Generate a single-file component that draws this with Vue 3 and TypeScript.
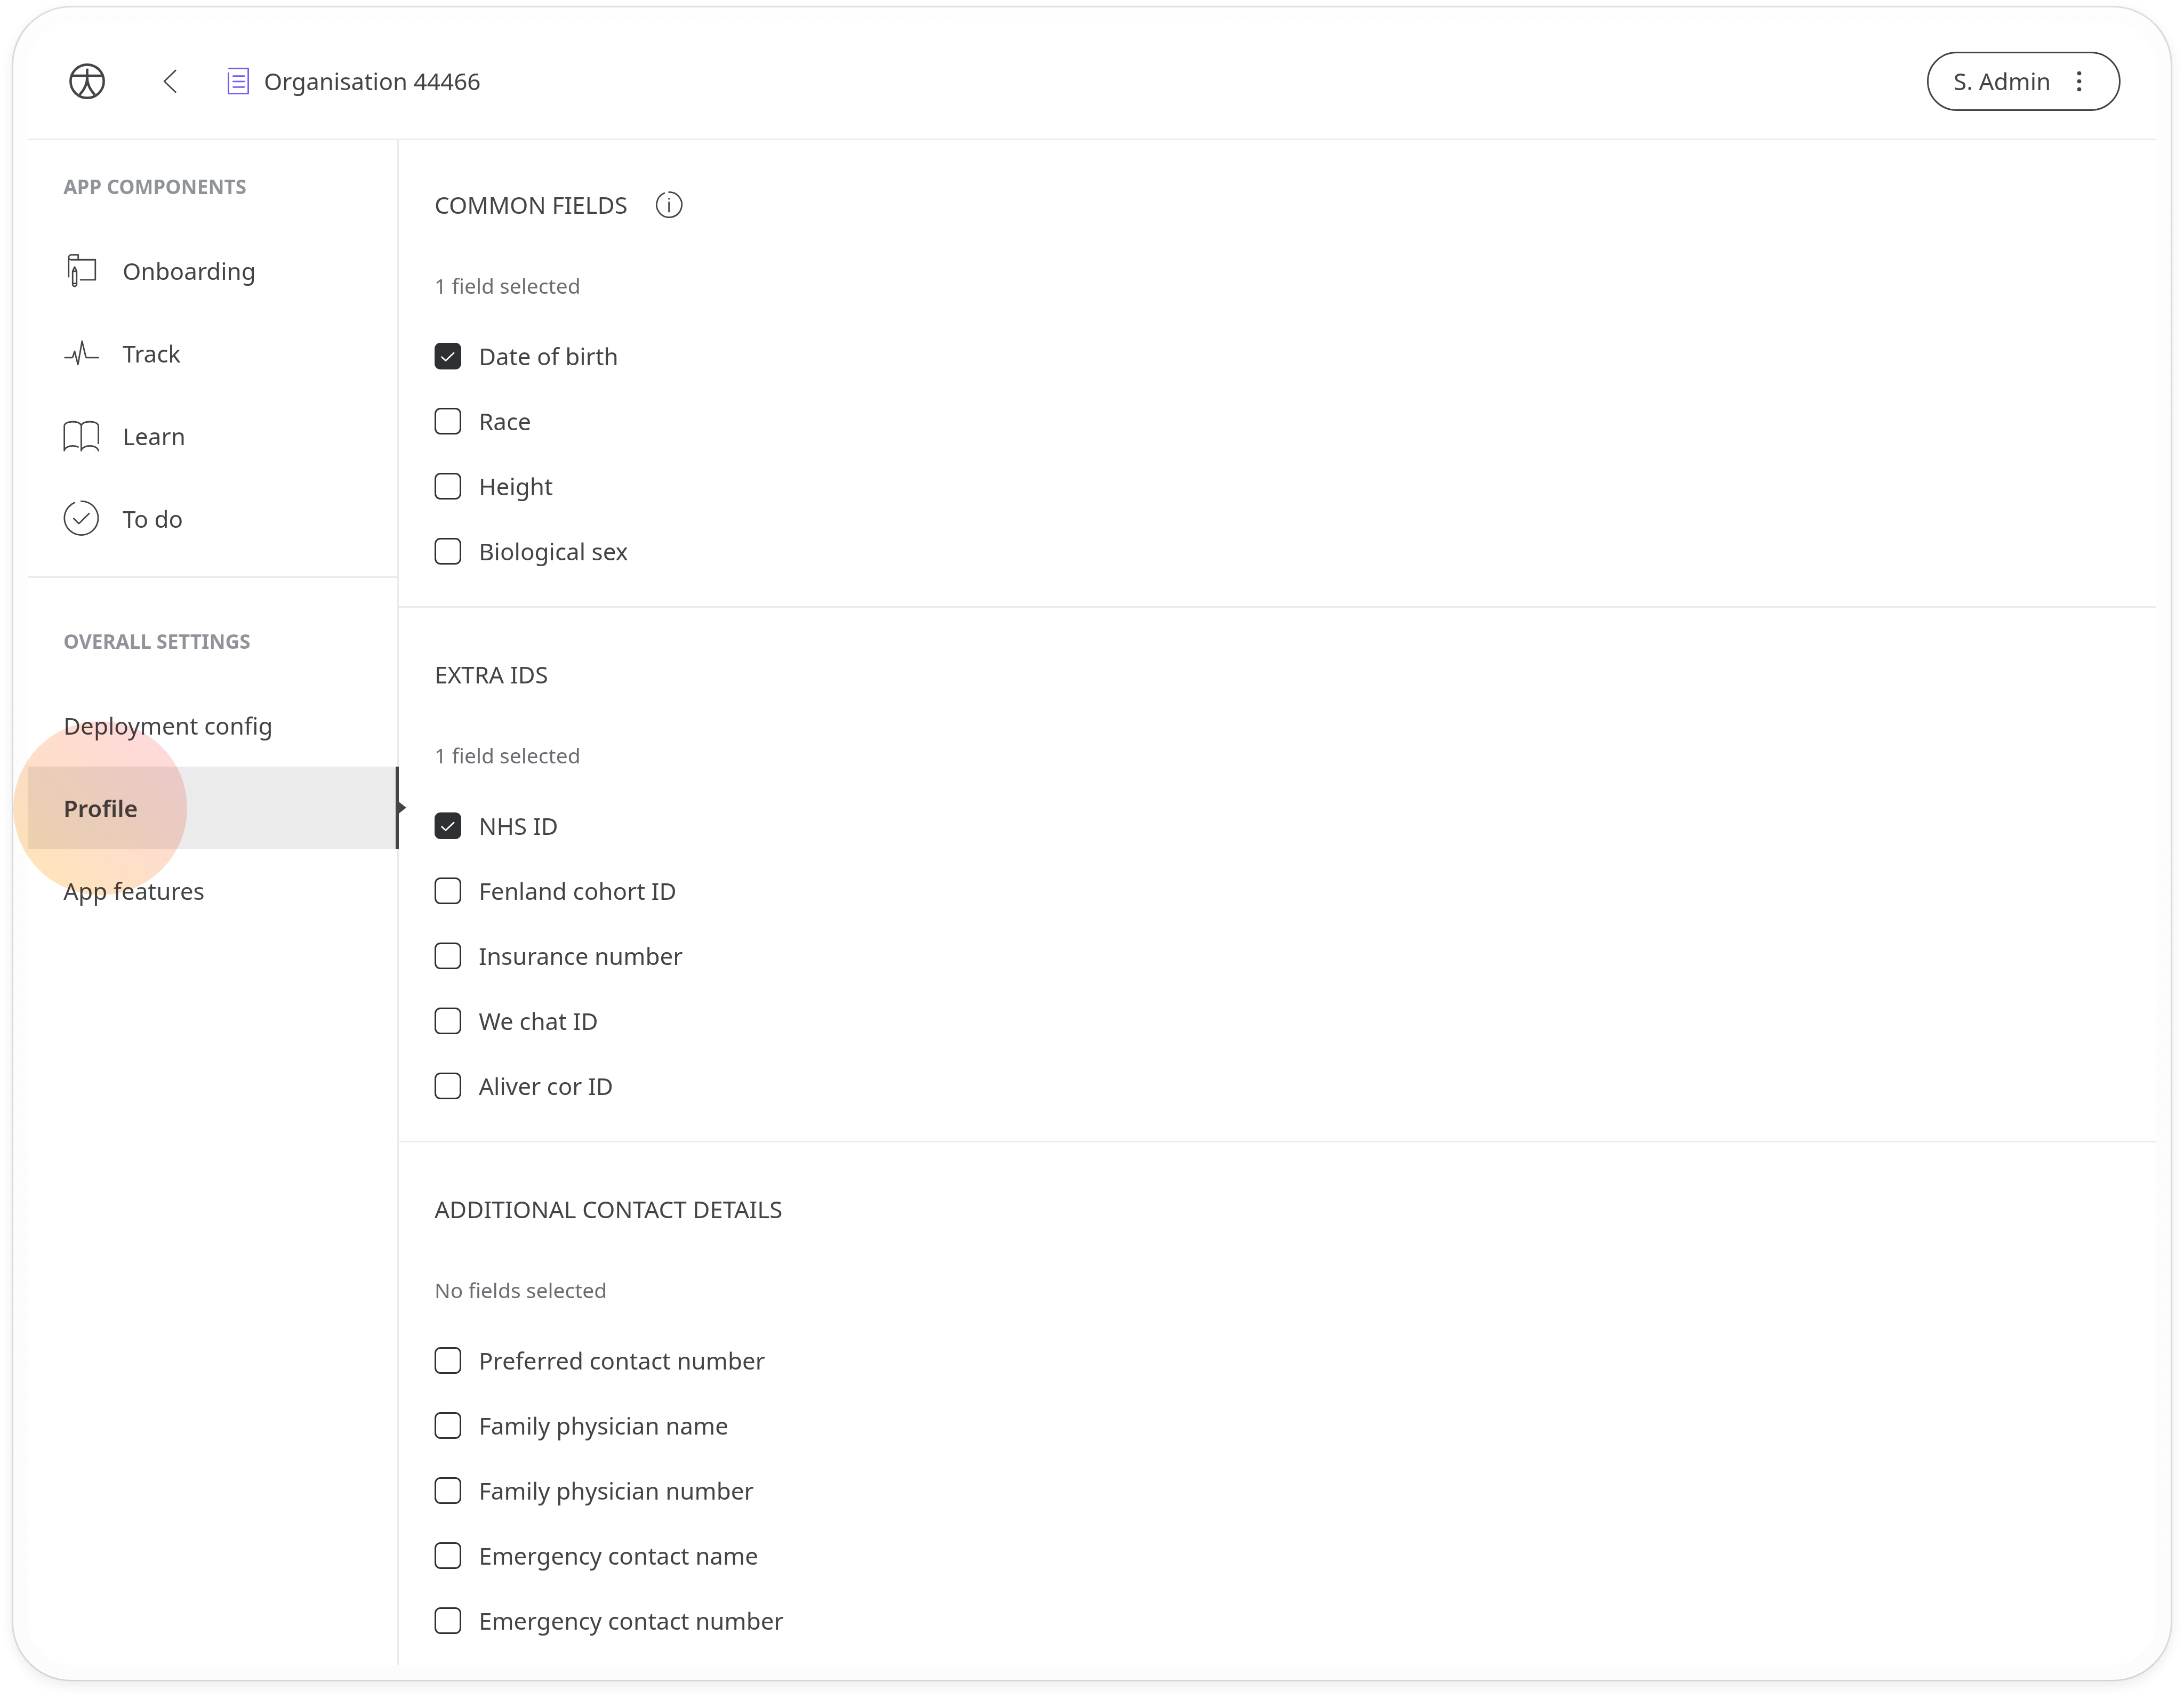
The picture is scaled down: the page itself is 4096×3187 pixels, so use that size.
<script setup lang="ts">
import { reactive } from 'vue'

type IconName = 'onboarding' | 'track' | 'learn' | 'todo'

interface Field {
  label: string
  checked: boolean
}

interface FieldGroup {
  id: string
  title: string
  info: boolean
  fields: Field[]
}

const components: { label: string; icon: IconName }[] = [
  { label: 'Onboarding', icon: 'onboarding' },
  { label: 'Track', icon: 'track' },
  { label: 'Learn', icon: 'learn' },
  { label: 'To do', icon: 'todo' },
]

const settings: { label: string; active: boolean }[] = [
  { label: 'Deployment config', active: false },
  { label: 'Profile', active: true },
  { label: 'App features', active: false },
]

const toFields = (labels: string[], checked: string[] = []): Field[] =>
  labels.map((label) => ({ label, checked: checked.includes(label) }))

const groups = reactive<FieldGroup[]>([
  {
    id: 'common',
    title: 'COMMON FIELDS',
    info: true,
    fields: toFields(['Date of birth', 'Race', 'Height', 'Biological sex'], ['Date of birth']),
  },
  {
    id: 'ids',
    title: 'EXTRA IDS',
    info: false,
    fields: toFields(
      ['NHS ID', 'Fenland cohort ID', 'Insurance number', 'We chat ID', 'Aliver cor ID'],
      ['NHS ID'],
    ),
  },
  {
    id: 'contact',
    title: 'ADDITIONAL CONTACT DETAILS',
    info: false,
    fields: toFields([
      'Preferred contact number',
      'Family physician name',
      'Family physician number',
      'Emergency contact name',
      'Emergency contact number',
    ]),
  },
])

function summary(group: FieldGroup): string {
  const count = group.fields.filter((field) => field.checked).length
  if (count === 0) return 'No fields selected'
  return count === 1 ? '1 field selected' : `${count} fields selected`
}
</script>

<template>
  <div class="page">
    <div class="frame">
      <div class="screen">
        <header class="topbar">
          <svg class="logo" viewBox="0 0 96 96" aria-hidden="true">
            <circle cx="48" cy="48" r="44.6" />
            <path d="M7 33H89" />
            <path d="M48 14V38C48 58 39 72 27.6 84" />
            <path d="M48 38C48 58 57 72 68.4 84" />
          </svg>
          <button class="back" type="button" aria-label="Back">
            <svg viewBox="0 0 40 68" aria-hidden="true">
              <path d="M35 4.4L4.4 34L35 63.6" />
            </svg>
          </button>
          <svg class="doc" viewBox="0 0 66 80" aria-hidden="true">
            <path d="M7.5 5H60V73.6H6V17.8" />
            <path d="M19 25.7H49M19 40.7H49M19 55.7H49" />
          </svg>
          <span class="org">Organisation 44466</span>
          <button class="user" type="button">
            <span>S. Admin</span>
            <svg viewBox="0 0 24 80" aria-hidden="true">
              <circle cx="12" cy="18.2" r="5.6" />
              <circle cx="12" cy="40" r="5.6" />
              <circle cx="12" cy="61.8" r="5.6" />
            </svg>
          </button>
        </header>

        <div class="body">
          <aside class="sidebar">
            <nav class="group" aria-labelledby="nav-components">
              <h2 id="nav-components" class="group-title">APP COMPONENTS</h2>
              <a v-for="item in components" :key="item.label" class="item" href="#">
                <svg class="icon" viewBox="0 0 96 96" aria-hidden="true">
                  <template v-if="item.icon === 'onboarding'">
                    <path d="M14 64.5V13C14 9 17 6 21 6H39.7V19" />
                    <path d="M14 12.5C14 16.5 17 19 21 19H85.7V73H46" />
                    <path d="M30 38.5L24.7 49.5V85.2A5.4 5.4 0 0 0 35.5 85.2V49.5ZM24.7 50H35.5M24.7 82.7H35.5" />
                  </template>
                  <path
                    v-else-if="item.icon === 'track'"
                    d="M4 60H23C24.5 60 24.8 59.5 25.2 58L30 43L39 78.5L50 15.7L60 57.5C60.5 59.5 61 60 62.5 60H94"
                  />
                  <template v-else-if="item.icon === 'learn'">
                    <path d="M93.8 68.5V20.5C92 13.5 82 10 71 10C60 10 50.5 13.5 47.8 20C45 13.5 36 10 25 10C14 10 4 13.5 2.3 20.5V88C3.5 79.5 14 75 25 75C30.5 75 35.5 76.2 39.3 78" />
                    <path d="M47.8 20V88C49 79.5 60 75 71 75C82 75 92.6 79.5 93.8 88" />
                  </template>
                  <template v-else>
                    <path d="M47.6 1.7A45.4 45.4 0 1 1 30 5.4" />
                    <path d="M27.7 48.3L41.6 61.8L68.8 34.7" />
                  </template>
                </svg>
                <span>{{ item.label }}</span>
              </a>
            </nav>

            <nav class="group" aria-labelledby="nav-settings">
              <h2 id="nav-settings" class="group-title">OVERALL SETTINGS</h2>
              <a
                v-for="item in settings"
                :key="item.label"
                class="item"
                :class="{ active: item.active }"
                :aria-current="item.active ? 'page' : undefined"
                href="#"
              >
                <span>{{ item.label }}</span>
                <span v-if="item.active" class="tap" aria-hidden="true"></span>
              </a>
            </nav>
          </aside>

          <main class="content">
            <section v-for="group in groups" :key="group.id" class="panel">
              <div class="heading">
                <h3>{{ group.title }}</h3>
                <button v-if="group.info" class="info" type="button" aria-label="About common fields">
                  <svg viewBox="0 0 72 72" aria-hidden="true">
                    <path d="M35.5 2A34 34 0 1 1 22.8 4.7" />
                    <path d="M35.5 29.5V55" />
                    <circle cx="35.5" cy="20" r="2.4" />
                  </svg>
                </button>
              </div>
              <p class="summary">{{ summary(group) }}</p>
              <label v-for="field in group.fields" :key="field.label" class="field">
                <span class="box">
                  <input v-model="field.checked" type="checkbox" />
                  <svg v-if="field.checked" viewBox="0 0 72 72" aria-hidden="true">
                    <path d="M19.5 38.5L30 48.2L52 27.5" />
                  </svg>
                </span>
                <span>{{ field.label }}</span>
              </label>
            </section>
          </main>
        </div>
      </div>
    </div>
  </div>
</template>

<style>
body {
  margin: 0;
  background: #fff;
}
</style>

<style scoped>
.page {
  box-sizing: border-box;
  display: flex;
  min-height: 100vh;
  padding: 11px 22px 33px;
  color: #444348;
  font-family: 'Noto Sans', sans-serif;
  font-size: 44px;
  line-height: 60px;
}

.frame {
  display: flex;
  flex: 1;
  padding: 28px;
  border: 3px solid;
  border-color: #dddfdf #d8dada #d3d5d7;
  border-radius: 111px;
  background: linear-gradient(#fefefe, #fdfdfd 56px, #fcfcfc);
  box-shadow: 0 8px 24px rgba(0, 0, 0, 0.08);
}

.screen {
  display: flex;
  flex: 1;
  flex-direction: column;
  border-radius: 80px;
  background: #fff;
}

svg {
  display: block;
  overflow: visible;
  fill: none;
  stroke: currentColor;
  stroke-width: 4;
  stroke-linecap: round;
  stroke-linejoin: round;
}

button {
  margin: 0;
  padding: 0;
  border: 0;
  background: none;
  color: inherit;
  font: inherit;
  cursor: pointer;
}

/* Top bar */
.topbar {
  box-sizing: border-box;
  display: flex;
  align-items: center;
  height: 221px;
  padding: 2px 66px 0 77px;
  border-bottom: 3px solid #ebebeb;
}

.logo {
  width: 67px;
  height: 67px;
  stroke-width: 6.6;
  stroke-linecap: butt;
}

.back {
  margin-left: 108px;
}

.back svg {
  width: 28px;
  height: 47px;
}

.doc {
  width: 46px;
  height: 55px;
  margin-left: 91px;
  color: #7559f5;
}

.org {
  margin-left: 25px;
}

.user {
  box-sizing: border-box;
  display: flex;
  align-items: center;
  justify-content: space-between;
  width: 363px;
  height: 111px;
  margin-left: auto;
  padding: 0 66px 0 47px;
  border: 3px solid #444348;
  border-radius: 56px;
}

.user svg {
  width: 17px;
  height: 55px;
  fill: currentColor;
  stroke: none;
}

.body {
  display: flex;
  flex: 1;
}

/* Sidebar */
.sidebar {
  box-sizing: border-box;
  flex: none;
  width: 695px;
  border-right: 3px solid #ebebeb;
}

.group {
  padding-top: 95px;
}

.group:first-child {
  padding: 63px 0 31px;
  border-bottom: 3px solid #ebebeb;
}

.group-title {
  margin: 0 0 56px;
  padding-left: 66px;
  color: #909399;
  font-size: 37px;
  font-weight: 700;
  line-height: 48px;
}

.item {
  box-sizing: border-box;
  display: flex;
  align-items: center;
  gap: 44px;
  height: 155px;
  padding-left: 66px;
  color: inherit;
  text-decoration: none;
}

.icon {
  width: 67px;
  height: 67px;
}

.item.active {
  position: relative;
  margin-right: -3px;
  border-right: 6px solid #444348;
  background: #ebebeb;
  font-weight: 600;
}

.item.active::after {
  position: absolute;
  top: 66px;
  right: -20px;
  border: 11px solid transparent;
  border-right-width: 0;
  border-left: 14px solid #444348;
  content: '';
}

/* Tap marker lying over the selected row */
.tap {
  position: absolute;
  top: -85px;
  left: -28px;
  width: 326px;
  height: 326px;
  border-radius: 50%;
  background: linear-gradient(45deg, #fee5b4, #fedecb 50%, #fed8e0);
  mix-blend-mode: multiply;
  pointer-events: none;
}

/* Field groups */
.content {
  flex: 1;
}

.panel {
  padding: 95px 67px 42px;
  border-bottom: 3px solid #ebebeb;
}

.panel:first-child {
  padding-top: 91px;
}

.panel:last-child {
  padding-bottom: 0;
  border-bottom: 0;
}

.heading {
  display: flex;
  align-items: center;
  gap: 53px;
  height: 60px;
}

h3 {
  margin: 0;
  font-size: 44px;
  font-weight: 400;
}

.info svg {
  width: 50px;
  height: 50px;
}

.info circle {
  fill: currentColor;
  stroke: none;
}

.summary {
  margin: 96px 0 45px;
  color: #6a6d72;
  font-size: 39px;
  line-height: 52px;
}

.field {
  display: flex;
  align-items: center;
  gap: 33px;
  width: fit-content;
  height: 122px;
  cursor: pointer;
}

.box {
  display: grid;
  width: 50px;
  height: 50px;
}

.box input,
.box svg {
  grid-area: 1 / 1;
  width: 50px;
  height: 50px;
}

.box input {
  box-sizing: border-box;
  margin: 0;
  border: 3px solid #2f3033;
  border-radius: 11px;
  background: #fff;
  appearance: none;
}

.box input:checked {
  background: #2f3033;
}

.box svg {
  color: #fff;
  pointer-events: none;
}
</style>
